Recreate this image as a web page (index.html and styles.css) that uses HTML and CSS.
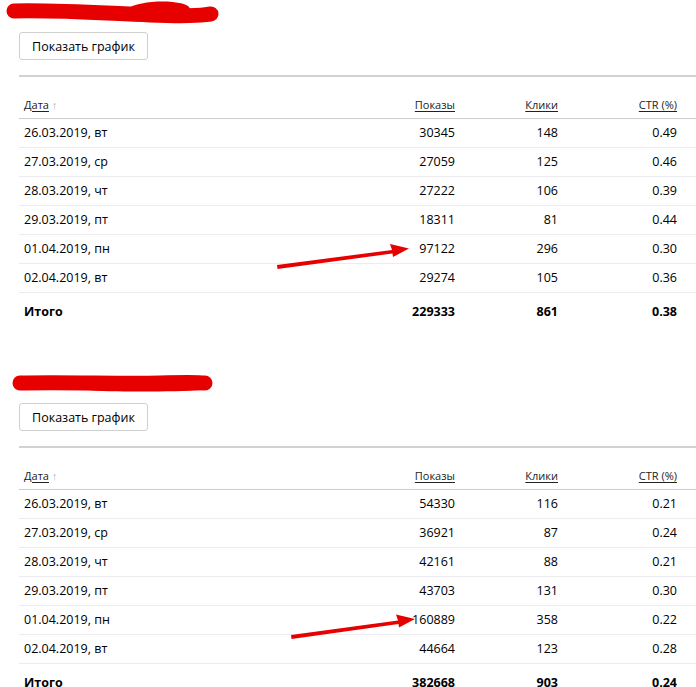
FILE: index.html
```html
<!DOCTYPE html>
<html lang="ru">
<head>
<meta charset="utf-8">
<link rel="stylesheet" href="styles.css">
</head>
<body>
<section class="report">
  <svg class="scribble" width="230" height="32" viewBox="0 0 230 32">
    <path d="M14 11 C60 10 100 13 150 15 S200 15 211 14" stroke="#e60000" stroke-width="15" stroke-linecap="round" fill="none"/>
    <path d="M127 9 C138 0 178 -1 188 6 C194 11 190 19 176 20 L134 20 C120 19 121 12 127 9 Z" fill="#e60000"/>
  </svg>
  <button class="btn">Показать график</button>
  <table class="stats">
    <colgroup><col><col class="c-shows"><col class="c-clicks"><col class="c-ctr"><col class="c-pad"></colgroup>
    <thead>
      <tr><th class="left"><span class="hd">Дата</span> <span class="sort">↑</span></th><th><span class="hd">Показы</span></th><th><span class="hd">Клики</span></th><th><span class="hd">CTR (%)</span></th><th></th></tr>
    </thead>
    <tbody>
      <tr><td class="left">26.03.2019, вт</td><td>30345</td><td>148</td><td>0.49</td><td></td></tr>
      <tr><td class="left">27.03.2019, ср</td><td>27059</td><td>125</td><td>0.46</td><td></td></tr>
      <tr><td class="left">28.03.2019, чт</td><td>27222</td><td>106</td><td>0.39</td><td></td></tr>
      <tr><td class="left">29.03.2019, пт</td><td>18311</td><td>81</td><td>0.44</td><td></td></tr>
      <tr><td class="left">01.04.2019, пн</td><td>97122</td><td>296</td><td>0.30</td><td></td></tr>
      <tr><td class="left">02.04.2019, вт</td><td>29274</td><td>105</td><td>0.36</td><td></td></tr>
    </tbody>
    <tfoot>
      <tr><td class="left">Итого</td><td>229333</td><td>861</td><td>0.38</td><td></td></tr>
    </tfoot>
  </table>
  <svg class="arrow" width="696" height="371" viewBox="0 0 696 371">
    <polygon points="277,265 392,250 390,244 409,248.5 393,257 392.5,253.5 277.5,269" fill="#e60000"/>
  </svg>
</section>
<section class="report">
  <svg class="scribble" width="230" height="32" viewBox="0 0 230 32">
    <path d="M20 12 C70 11 120 13 160 12 S200 12 205 12" stroke="#e60000" stroke-width="15" stroke-linecap="round" fill="none"/>
    <path d="M80 7 C110 5 190 5 205 7 L205 19 C170 21 110 21 85 19 Z" fill="#e60000"/>
  </svg>
  <button class="btn">Показать график</button>
  <table class="stats">
    <colgroup><col><col class="c-shows"><col class="c-clicks"><col class="c-ctr"><col class="c-pad"></colgroup>
    <thead>
      <tr><th class="left"><span class="hd">Дата</span> <span class="sort">↑</span></th><th><span class="hd">Показы</span></th><th><span class="hd">Клики</span></th><th><span class="hd">CTR (%)</span></th><th></th></tr>
    </thead>
    <tbody>
      <tr><td class="left">26.03.2019, вт</td><td>54330</td><td>116</td><td>0.21</td><td></td></tr>
      <tr><td class="left">27.03.2019, ср</td><td>36921</td><td>87</td><td>0.24</td><td></td></tr>
      <tr><td class="left">28.03.2019, чт</td><td>42161</td><td>88</td><td>0.21</td><td></td></tr>
      <tr><td class="left">29.03.2019, пт</td><td>43703</td><td>131</td><td>0.30</td><td></td></tr>
      <tr><td class="left">01.04.2019, пн</td><td>160889</td><td>358</td><td>0.22</td><td></td></tr>
      <tr><td class="left">02.04.2019, вт</td><td>44664</td><td>123</td><td>0.28</td><td></td></tr>
    </tbody>
    <tfoot>
      <tr><td class="left">Итого</td><td>382668</td><td>903</td><td>0.24</td><td></td></tr>
    </tfoot>
  </table>
  <svg class="arrow" width="696" height="371" viewBox="0 0 696 371">
    <polygon points="291,264 398,249.5 396,243.5 415,248 399,256.5 398.5,253 291.5,268" fill="#e60000"/>
  </svg>
</section>
</body>
</html>
```

FILE: styles.css
```css
html, body {
  margin: 0;
  padding: 0;
  background: #fff;
}
body {
  font-family: "Open Sans", "Noto Sans", "Liberation Sans", sans-serif;
  color: #000;
  overflow: hidden;
}
.report {
  position: relative;
  height: 371px;
  padding-left: 19px;
}
.scribble {
  display: block;
  margin-left: -19px;
  width: 230px;
  height: 32px;
}
.btn {
  display: block;
  box-sizing: border-box;
  width: 129px;
  height: 28px;
  padding: 0;
  border: 1px solid #cfcfcf;
  border-radius: 3px;
  background: #fff;
  font-family: inherit;
  font-size: 12.5px;
  color: #000;
}
.stats {
  margin-top: 15px;
  width: 677px;
  border-collapse: collapse;
  table-layout: fixed;
  border-top: 2px solid #d2d2d2;
  font-size: 12.5px;
}
.c-shows { width: 110px; }
.c-clicks { width: 103px; }
.c-ctr { width: 119px; }
.c-pad { width: 19px; }
.stats th {
  height: 42px;
  box-sizing: border-box;
  padding: 0 0 6px 0;
  vertical-align: bottom;
  text-align: right;
  font-weight: normal;
  font-size: 11px;
  color: #222;
  border-bottom: 1px solid #cccccc;
}
.stats .hd {
  text-decoration: underline;
  text-underline-offset: 2px;
}
.stats .sort {
  color: #a9b4c8;
  font-size: 11px;
}
.stats td {
  height: 29px;
  box-sizing: border-box;
  padding: 0;
  text-align: right;
  vertical-align: middle;
  border-bottom: 1px solid #ececf0;
}
.stats .left {
  text-align: left;
  padding-left: 5px;
}
.stats tfoot td {
  height: 38px;
  border-bottom: none;
  font-weight: bold;
}
.arrow {
  position: absolute;
  left: 0;
  top: 0;
  pointer-events: none;
}
```
